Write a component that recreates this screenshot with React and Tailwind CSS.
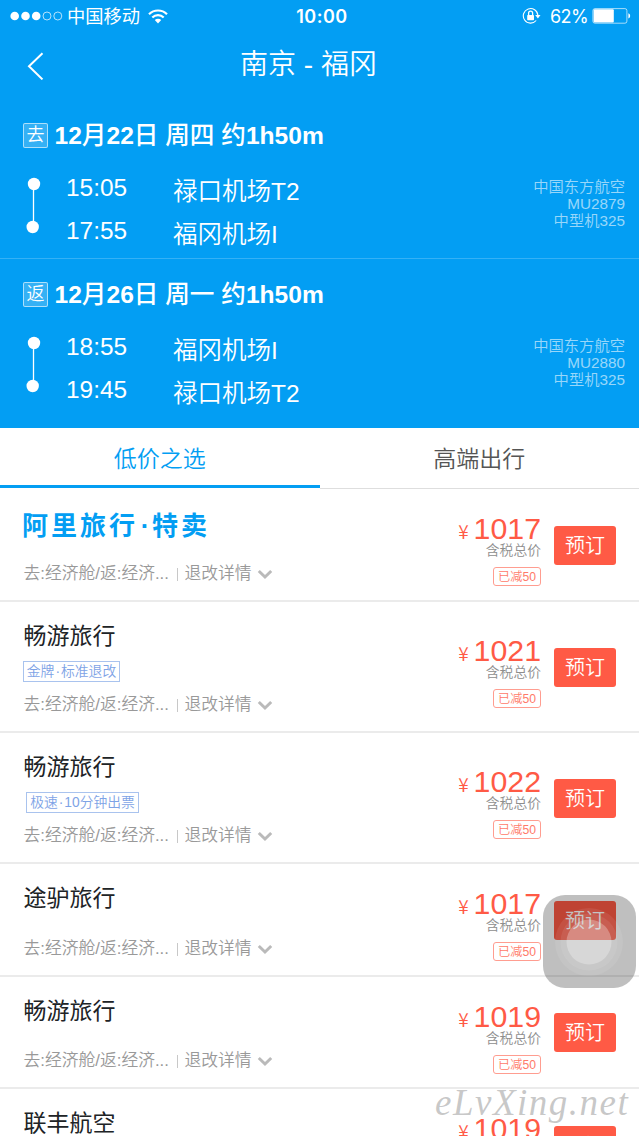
import React from "react";

const flights = [
  {
    tag: "去",
    date: "12月22日 周四 约1h50m",
    from: ["15:05", "禄口机场T2"],
    to: ["17:55", "福冈机场I"],
    info: ["中国东方航空", "MU2879", "中型机325"],
    box: "h-[160px] pt-[23px]",
  },
  {
    tag: "返",
    date: "12月26日 周一 约1h50m",
    from: ["18:55", "福冈机场I"],
    to: ["19:45", "禄口机场T2"],
    info: ["中国东方航空", "MU2880", "中型机325"],
    box: "h-[169px] pt-[22px]",
  },
];

const offers = [
  { name: "阿里旅行·特卖", logo: true, price: "1017", height: "h-[113px]" },
  { name: "畅游旅行", label: ["金牌", "标准退改"], labelClass: "w-[97px] -ml-px", price: "1021", height: "h-[131px]" },
  { name: "畅游旅行", label: ["极速", "10分钟出票"], labelClass: "w-[113px] ml-[2px]", price: "1022", height: "h-[131px]" },
  { name: "途驴旅行", price: "1017", height: "h-[113px]" },
  { name: "畅游旅行", price: "1019", height: "h-[112px]" },
  { name: "联丰航空", price: "1019", height: "h-[113px]" },
];

function StatusBar() {
  return (
    <div className="grid h-8 grid-cols-[1fr_60px_1fr] items-center">
      <div className="flex items-center pl-[10px]">
        <svg width="53" height="10" viewBox="0 0 53 10" fill="white">
          <circle cx="4.7" cy="5" r="4.3" />
          <circle cx="15.5" cy="5" r="4.3" />
          <circle cx="26.2" cy="5" r="4.3" />
          <circle cx="37" cy="5" r="4" fill="none" stroke="white" strokeWidth=".7" />
          <circle cx="47.8" cy="5" r="4" fill="none" stroke="white" strokeWidth=".7" />
        </svg>
        <span className="ml-1 pt-[2px] text-[18.3px] leading-[30px]">中国移动</span>
        <svg className="ml-2" width="20" height="15" viewBox="0 0 20 15" fill="none" stroke="white" strokeWidth="2.2">
          <path d="M1 5.2a12.8 12.8 0 0 1 18 0" />
          <path d="M4.3 8.6a8 8 0 0 1 11.4 0" />
          <path d="M6.8 11.1a4.5 4.5 0 0 1 6.4 0L10 14.5Z" fill="white" stroke="none" />
        </svg>
      </div>
      <span className="pl-[5px] text-center font-['Inter',sans-serif] text-[18px] font-semibold tracking-[0.5px]">10:00</span>
      <div className="flex items-center justify-end pr-[8px]">
        <svg width="19" height="18" viewBox="0 0 19 18" fill="none" stroke="white" strokeWidth="1.1">
          <path d="M14.2 13.5A7.3 7.3 0 1 1 15.9 8.3" />
          <path d="M13.2 8h5.3l-2.6 3.4Z" fill="white" stroke="none" />
          <rect x="5.2" y="8" width="6.8" height="5.3" rx=".7" fill="white" stroke="none" />
          <path d="M6.6 8V6.2a2 2 0 0 1 4 0V8" strokeWidth="1.3" />
        </svg>
        <span className="ml-[9px] w-[38px] whitespace-nowrap font-['Inter',sans-serif] text-[18px] tracking-[-0.6px]">62%</span>
        <svg className="ml-[4px]" width="39" height="16" viewBox="0 0 39 16">
          <rect x=".9" y=".6" width="34" height="14.6" rx="2" fill="none" stroke="white" strokeOpacity=".65" />
          <rect x="1.6" y="1.3" width="20.2" height="13.2" rx="1" fill="white" />
          <path d="M36.4 5.3c2.3.8 2.3 4.4 0 5.2Z" fill="white" />
        </svg>
      </div>
    </div>
  );
}

function Header() {
  return (
    <div className="grid h-[67px] grid-cols-[80px_1fr_80px] items-center">
      <svg className="ml-[27px]" width="18" height="28" viewBox="0 0 18 28" fill="none" stroke="white" strokeWidth="2">
        <path d="M15.5 1.2 2 14.2 15.5 27.4" />
      </svg>
      <h1 className="-mt-[2px] pr-[22px] text-center text-[28px] leading-[40px] font-[350]">南京 - 福冈</h1>
    </div>
  );
}

// Latin letters and digits are bold, Chinese characters one step lighter.
function MixedWeight({ text }) {
  return text.split(/([0-9a-z]+)/).map((part, i) => (
    <span key={i} className={i % 2 ? "font-bold" : "font-medium"}>
      {part}
    </span>
  ));
}

function Flight({ flight }) {
  return (
    <section className={flight.box}>
      <div className="flex h-[26px] items-center pl-[23px]">
        <span className="flex h-[25px] w-[25px] items-center justify-center rounded-[2px] border border-white/60 bg-white/20 text-[18px] leading-[22px] font-[350]">
          {flight.tag}
        </span>
        <h2 className="ml-[6.5px] pt-[2px] text-[24.6px] leading-[26px] whitespace-pre">
          <MixedWeight text={flight.date} />
        </h2>
      </div>
      <div className="mt-[18px] flex pr-[14px] pl-[26px]">
        <svg className="mt-[11px]" width="16" height="58" viewBox="0 0 16 58" fill="white">
          <path d="M7.5 6v45" stroke="white" strokeWidth="1.3" />
          <circle cx="8" cy="7" r="6.2" />
          <circle cx="6.7" cy="50" r="6.2" />
        </svg>
        <div className="ml-[24px] w-[107px] text-[24.4px] leading-[43px]">
          <div>{flight.from[0]}</div>
          <div>{flight.to[0]}</div>
        </div>
        <div className="mt-[4px] text-[24.5px] leading-[43px] font-[350]">
          <div>{flight.from[1]}</div>
          <div>{flight.to[1]}</div>
        </div>
        <div className="mt-[12px] ml-auto text-right text-[15.3px] leading-[17px] font-[350] text-white/60">
          {flight.info.map((line) => (
            <div key={line}>{line}</div>
          ))}
        </div>
      </div>
    </section>
  );
}

function OfferName({ offer }) {
  if (offer.logo) {
    return (
      <h3 className="mt-[3px] -ml-[2px] flex h-[32px] items-center text-[26px] leading-[32px] font-bold text-[#039ef3]">
        <span className="tracking-[3px]">阿里旅行</span>
        <span className="w-[14px] text-center">·</span>
        <span className="tracking-[3px]">特卖</span>
      </h3>
    );
  }
  return <h3 className="-ml-[0.5px] text-[23px] leading-[32px] text-[#202326]">{offer.name}</h3>;
}

function Offer({ offer }) {
  return (
    <article className={`${offer.height} flex shrink-0 justify-between border-b-2 border-[#ebebeb] pr-[23px] pl-[24px]`}>
      <div className="flex flex-col pt-[18px] pb-[14px]">
        <OfferName offer={offer} />
        {offer.label && (
          <span className={`${offer.labelClass} mt-[9px] h-[21px] border border-[#a9c3ee] text-center text-[13.8px] leading-[19px] font-[350] whitespace-nowrap text-[#7ea3e6]`}>
            {offer.label[0]}
            <span className="mx-[1px]">·</span>
            {offer.label[1]}
          </span>
        )}
        <div className="mt-auto flex h-[24px] items-center text-[16.8px] leading-[24px] font-[350] text-[#999]">
          <span className="-ml-[0.5px] w-[147px] whitespace-nowrap">去:经济舱/返:经济...</span>
          <span className="ml-[6px] h-[13px] w-px bg-[#c8c8c8]" />
          <span className="ml-[7px]">退改详情</span>
          <svg className="mt-[1px] ml-[5px]" width="16" height="11" viewBox="0 0 16 11" fill="none" stroke="#bababa" strokeWidth="3">
            <path d="m1.8 2 6.2 6 6.2-6" />
          </svg>
        </div>
      </div>
      <div className="flex items-center pt-px">
        <div className="flex flex-col items-end pt-[10px]">
          <div className="flex h-[30px] items-baseline text-[#ff5a45]">
            <span className="mr-[5px] font-['Noto_Sans_CJK_SC',sans-serif] text-[19px] leading-[20px] font-[350]">¥</span>
            <span className="text-[30.3px] leading-[30px]">{offer.price}</span>
          </div>
          <span className="mt-[-2px] text-[13.8px] leading-[18px] font-[350] text-[#8e8e8e]">含税总价</span>
          <span className="mt-[7px] h-[19px] w-[48px] rounded-[3px] border border-[#ff9d90] text-center text-[12.2px] leading-[18px] font-[350] whitespace-nowrap text-[#ff7a69]">
            已减50
          </span>
        </div>
        <button className="ml-[13px] h-[39px] w-[62px] rounded-[3px] bg-[#ff5a45] text-[20px] leading-[41px] font-[350] text-white">
          预订
        </button>
      </div>
    </article>
  );
}

export default function App() {
  return (
    <div className="relative flex h-[1136px] w-[639px] flex-col overflow-hidden bg-white font-['Liberation_Sans','Noto_Sans_CJK_SC',sans-serif]">
      <header className="h-[428px] shrink-0 bg-[#039ef3] text-white">
        <StatusBar />
        <Header />
        <div className="divide-y divide-white/20">
          {flights.map((flight) => (
            <Flight key={flight.tag} flight={flight} />
          ))}
        </div>
      </header>
      <nav className="grid h-[61px] shrink-0 grid-cols-2 text-center text-[23px] leading-[62px] font-[350]">
        <div className="flex h-[60px] flex-col text-[#039ef3]">
          <span className="h-[57px]">低价之选</span>
          <span className="h-[3px] bg-[#039ef3]" />
        </div>
        <span className="h-[61px] border-b border-[#dedede] text-[#555]">高端出行</span>
      </nav>
      <main className="flex flex-col">
        {offers.map((offer, i) => (
          <Offer key={i} offer={offer} />
        ))}
      </main>
      <div className="absolute top-[895px] left-[543px] h-[93px] w-[93px] rounded-[22px] bg-black/25">
        <svg width="93" height="93" viewBox="0 0 93 93" fill="white">
          <circle cx="46" cy="47" r="34" fillOpacity=".08" />
          <circle cx="46" cy="47" r="28.5" fillOpacity=".08" />
          <circle cx="46" cy="47" r="22.5" fillOpacity=".28" />
        </svg>
      </div>
      <div className="absolute top-[1081px] left-[435px] font-['Liberation_Serif',serif] text-[37px] leading-[44px] tracking-[1.5px] whitespace-nowrap text-[#999]/55 italic">
        eLvXing.net
      </div>
    </div>
  );
}
